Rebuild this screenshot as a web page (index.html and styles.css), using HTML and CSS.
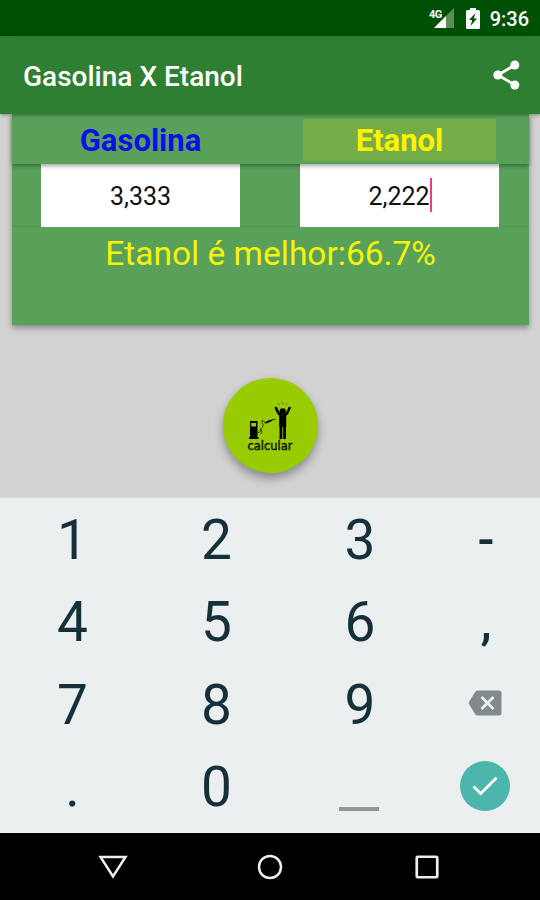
FILE: index.html
```
<!DOCTYPE html>
<html lang="pt-BR">
<head>
    <meta charset="UTF-8">
    <meta name="viewport" content="width=device-width, initial-scale=1.0">
    <title>Gasolina X Etanol</title>
    <link rel="stylesheet" href="styles.css">
</head>
<body>
    <div class="status-bar">
        <svg class="signal" width="26" height="22" viewBox="0 0 26 22">
            <path d="M25 0V20H5Z" fill="#fff" fill-opacity="0.35"/>
            <path d="M17 8V20H5Z" fill="#fff"/>
            <text x="0" y="9.500">4G</text>
        </svg>
        <svg class="battery" width="14" height="21" viewBox="0 0 14 21">
            <path d="M4 0h6v2h2.500q1.500 0 1.500 1.500v16q0 1.500-1.500 1.500h-11Q0 21 0 19.500v-16Q0 2 1.500 2H4Z" fill="#fff"/>
            <path d="M9.500 5L3 12h3.200l-1.700 6L11 10.500H7.700Z" fill="#005005"/>
        </svg>
        <span class="clock">9:36</span>
    </div>

    <header class="app-bar">
        <h1>Gasolina X Etanol</h1>
        <svg class="share" width="27" height="30" viewBox="0 0 27 30">
            <path d="M22 5L5 15L22 25" fill="none" stroke="#fff" stroke-width="2.800"/>
            <circle cx="21.800" cy="5" r="4.500" fill="#fff"/>
            <circle cx="4.800" cy="15" r="4.500" fill="#fff"/>
            <circle cx="21.800" cy="25" r="4.500" fill="#fff"/>
        </svg>
    </header>

    <main class="content">
        <div class="card">
            <div class="labels">
                <span class="label gasolina">Gasolina</span>
                <span class="label etanol">Etanol</span>
            </div>
            <div class="prices">
                <div class="price">3,333</div>
                <div class="price">2,222<span class="cursor"></span></div>
            </div>
            <div class="result">Etanol é melhor:66.7%</div>
        </div>

        <button class="calcular" type="button">
            <svg width="46" height="38" viewBox="0 0 46 38">
                <!-- fuel pump -->
                <path d="M3 19h7.500v16h1v2H2v-2h1Z"/>
                <path d="M4.200 21h4.800v3.500h-4.800Z" fill="#99cc00"/>
                <path d="M10.500 31q3.500-1 3.500-4q0-1 1.500-2q1.500-2 0-3.500t0-3l2 1M13.500 27q2.500 3 0.500 5" fill="none" stroke="#000" stroke-opacity="0.700" stroke-width="1"/>
                <path d="M17 21l4-2.500 6-1.500-3 2.500-5 2ZM26 17.200l4 0.300-4 0.700Z"/>
                <!-- driver with raised arms -->
                <circle cx="35.700" cy="9.500" r="3.200"/>
                <path d="M28.500 5L31.500 11.500L35.700 14.500L40 11.500L43 5" fill="none" stroke="#000" stroke-width="2.500"/>
                <path d="M32.200 13h7v12h-7ZM32.500 24h2.800v13h-2.800ZM36.200 24h2.800v13h-2.800Z"/>
                <path d="M31.500 1l1.500 2M35.700 0v2.500M40 1l-1.500 2" stroke="#000" stroke-opacity="0.500" stroke-width="0.700"/>
            </svg>
            <span>calcular</span>
        </button>
    </main>

    <div class="keyboard">
        <div class="key">1</div>
        <div class="key">2</div>
        <div class="key">3</div>
        <div class="key symbol">-</div>
        <div class="key">4</div>
        <div class="key">5</div>
        <div class="key">6</div>
        <div class="key symbol">,</div>
        <div class="key">7</div>
        <div class="key">8</div>
        <div class="key">9</div>
        <div class="key icon">
            <svg width="34" height="26" viewBox="0 0 34 26">
                <path d="M9.500 0.500H31q2.500 0 2.500 2.500v20q0 2.500-2.500 2.500H9.500q-1.500 0-2.500-1.500L0.500 13L7 2q1-1.500 2.500-1.500Z" fill="#80898b"/>
                <path d="M13.500 7l12 12M25.500 7l-12 12" stroke="#eceff0" stroke-width="2.800"/>
            </svg>
        </div>
        <div class="key">.</div>
        <div class="key">0</div>
        <div class="key icon"><span class="space"></span></div>
        <div class="key icon">
            <span class="done">
                <svg width="26" height="20" viewBox="0 0 26 20">
                    <path d="M1.500 10.500L8.700 17.500L24.500 1.800" fill="none" stroke="#fff" stroke-width="2.700"/>
                </svg>
            </span>
        </div>
    </div>

    <nav class="nav-bar">
        <svg width="30" height="26" viewBox="0 0 30 26">
            <path d="M2.500 3H27.500L15 22.500Z" fill="none" stroke="#eee" stroke-width="2.500"/>
        </svg>
        <svg width="26" height="26" viewBox="0 0 26 26">
            <circle cx="13" cy="13" r="11" fill="none" stroke="#eee" stroke-width="2.500"/>
        </svg>
        <svg width="26" height="26" viewBox="0 0 26 26">
            <rect x="2.750" y="2.750" width="20.500" height="20.500" rx="1" fill="none" stroke="#eee" stroke-width="2.700"/>
        </svg>
    </nav>
</body>
</html>
```
FILE: styles.css
```
* {
    box-sizing: border-box;
}

body {
    margin: 0;
    width: 540px;
    height: 900px;
    display: flex;
    flex-direction: column;
    overflow: hidden;
    font-family: Roboto, "Liberation Sans", sans-serif;
    background-color: #d2d2d2;
}

svg {
    display: block;
    flex-shrink: 0;
}

/* Status bar */
.status-bar {
    height: 36px;
    display: flex;
    align-items: flex-start;
    justify-content: flex-end;
    padding: 8px 11px 0 0;
    background-color: #005005;
}

.signal {
    overflow: visible;
}

.signal text {
    font-size: 11px;
    font-weight: 700;
    letter-spacing: -0.5px;
    fill: #fff;
}

.battery {
    margin-left: 11px;
}

.clock {
    margin-left: 10px;
    color: #fff;
    font-size: 20px;
    font-weight: 500;
    line-height: 22px;
}

/* App bar */
.app-bar {
    position: relative;
    z-index: 2;
    height: 78px;
    display: flex;
    align-items: center;
    justify-content: space-between;
    padding: 0 20px 0 23px;
    background-color: #2f7f33;
    box-shadow: 0 1px 4px rgba(0, 0, 0, 0.4);
}

.app-bar h1 {
    margin: 3px 0 0;
    color: #fff;
    font-size: 28px;
    font-weight: 500;
    line-height: 32px;
}

/* Card with both prices */
.content {
    height: 384px;
    padding: 0 11px 0 12px;
}

.card {
    height: 211px;
    background-color: #59a158;
    box-shadow: 0 3px 6px rgba(0, 0, 0, 0.35);
}

.labels {
    position: relative;
    z-index: 1;
    height: 50px;
    display: flex;
    align-items: center;
    justify-content: space-between;
    padding: 2px 33px 0 32px;
    background-color: #59a158;
    box-shadow: 0 2px 4px rgba(0, 0, 0, 0.35);
}

.label {
    width: 193px;
    height: 42px;
    font-size: 31px;
    font-weight: 700;
    line-height: 44px;
    text-align: center;
}

.gasolina {
    color: #0b11e6;
}

.etanol {
    color: #fff200;
    background-color: #74ad48;
}

.prices {
    height: 63px;
    display: flex;
    justify-content: space-between;
    padding: 0 30px 0 29px;
    border-bottom: 1px solid #50964f;
}

.price {
    width: 199px;
    height: 63px;
    display: flex;
    align-items: center;
    justify-content: center;
    padding-top: 3px;
    color: #111;
    background-color: #fff;
    font-size: 25px;
    line-height: 60px;
}

.cursor {
    width: 2px;
    height: 34px;
    margin: -4px -1px 0 0;
    background-color: #ec407a;
}

.result {
    color: #f7f30c;
    font-size: 33.5px;
    line-height: 54px;
    text-align: center;
}

/* Round button */
.calcular {
    width: 95px;
    height: 95px;
    display: flex;
    flex-direction: column;
    align-items: center;
    margin: 53px auto 0;
    padding: 24px 1px 0 0;
    border: 0;
    border-radius: 50%;
    background-color: #99cc00;
    box-shadow: 0 5px 10px rgba(0, 0, 0, 0.35);
}

.calcular span {
    margin-top: 0;
    color: #111;
    font-family: "DejaVu Sans", sans-serif;
    font-size: 11.5px;
    line-height: 12px;
    -webkit-text-stroke: 0.4px #111;
}

/* Numeric keyboard */
.keyboard {
    height: 335px;
    display: grid;
    grid-template-columns: 144px 144px 143px 109px;
    grid-template-rows: repeat(4, 82.3px);
    background-color: #eceff0;
}

.key {
    display: flex;
    align-items: center;
    justify-content: center;
    padding: 2px 0 0 1px;
    color: #16303b;
    font-size: 55px;
    line-height: 82px;
}

.symbol {
    font-size: 50px;
    font-weight: 500;
}

.icon {
    padding: 0 1px 1px 0;
}

.space {
    width: 40px;
    height: 4px;
    margin-top: 46px;
    background-color: #929798;
}

.done {
    width: 50px;
    height: 50px;
    display: flex;
    align-items: center;
    justify-content: center;
    border-radius: 50%;
    background-color: #4db6ac;
}

/* Navigation bar */
.nav-bar {
    height: 67px;
    display: grid;
    grid-template-columns: 157px 157px 157px;
    align-items: center;
    justify-content: center;
    justify-items: center;
    background-color: #000;
}
```
